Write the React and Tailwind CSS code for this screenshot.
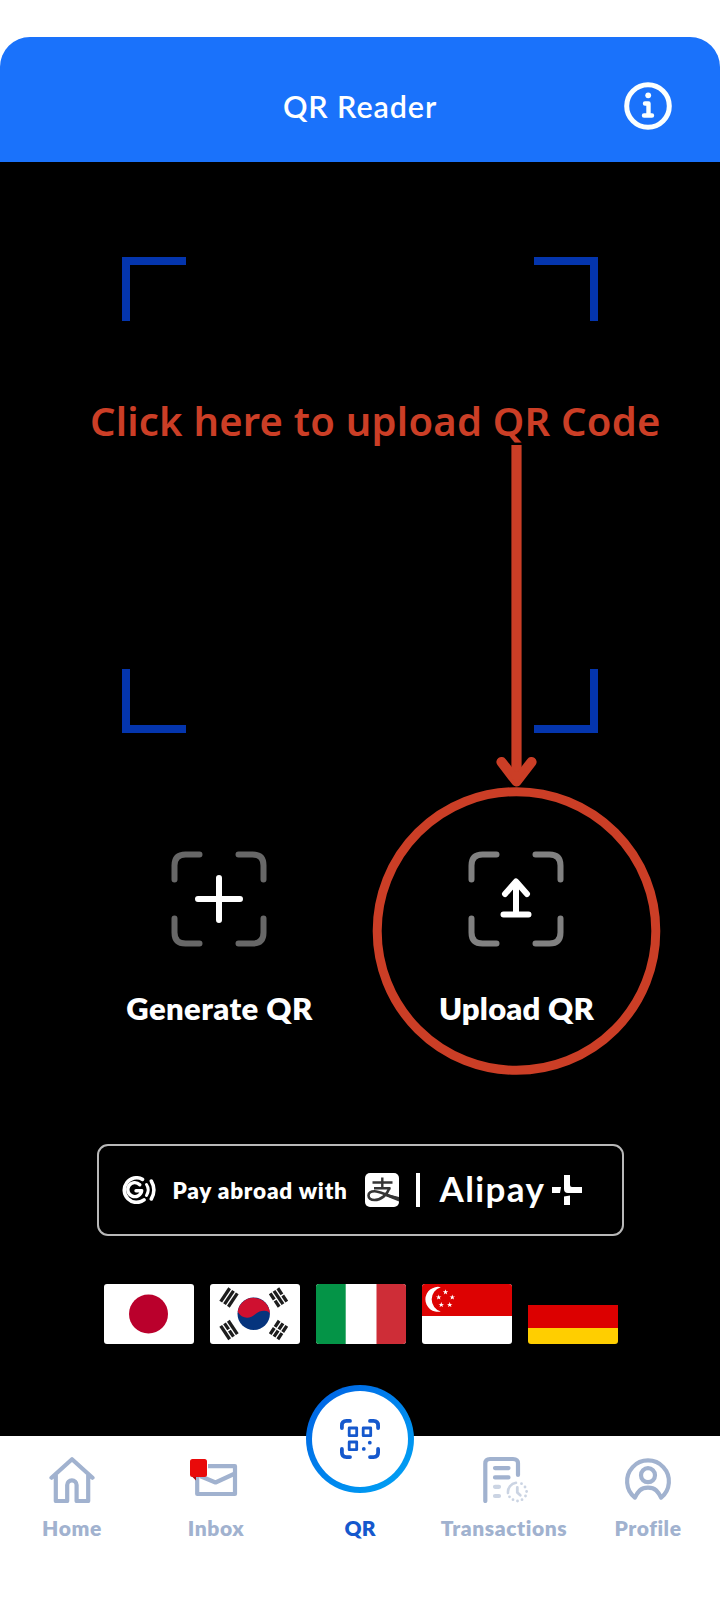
import React from 'react';

function Corners({ color, children }) {
  return (
    <svg className="mr-[2px] block size-24" viewBox="0 0 96 96" fill="none" strokeLinecap="round" strokeLinejoin="round">
      <g stroke={color} strokeWidth="6">
        <path d="M3.5 28.500V14.500Q3.500 3.500 14.500 3.500H28.500" />
        <path d="M67.500 3.500H81.500Q92.500 3.500 92.500 14.500V28.500" />
        <path d="M3.500 67.500V81.500Q3.500 92.500 14.500 92.500H28.500" />
        <path d="M67.500 92.500H81.500Q92.500 92.500 92.500 81.500V67.500" />
      </g>
      <g stroke="#fff" strokeWidth="6">{children}</g>
    </svg>
  );
}

function InfoIcon() {
  return (
    <svg className="block size-12" viewBox="0 0 48 48" fill="none" stroke="#fbfffe" strokeLinecap="round" strokeLinejoin="round">
      <circle cx="24" cy="24" r="21.300" strokeWidth="5" />
      <circle cx="24.200" cy="13.300" r="2.900" fill="#fbfffe" stroke="none" />
      <path d="M21 21.500H24.500V33.500M20 33.500H28" strokeWidth="4.400" />
    </svg>
  );
}

function GLogo() {
  return (
    <svg className="block h-7 w-[36px]" viewBox="0 0 36 28" fill="none" stroke="#fff" strokeLinecap="round" strokeLinejoin="round">
      <path d="M21.500 3.300A12.300 12.300 0 1 0 23 23.900" strokeWidth="3.600" />
      <path d="M18.800 8.700A7 7 0 1 0 20.700 14.700H15" strokeWidth="3.400" />
      <path d="M25.500 8.500Q28.900 13.500 25.500 19.500" strokeWidth="3" />
      <path d="M30.300 5Q35.500 14 30.300 23" strokeWidth="3.500" />
    </svg>
  );
}

function AlipayTile() {
  return (
    <svg className="block size-[34px]" viewBox="0 0 34 34">
      <rect width="34" height="34" rx="5" fill="#fff" />
      <g fill="none" stroke="#353535" strokeWidth="2.600">
        <path d="M7.500 9.500H27.500M17.300 4.500V15M9 15.200H25.500" strokeWidth="2.400" />
        <path d="M24.500 15C22 22 16 27 9.500 27C5.500 27 3.500 25 3.500 22.500C3.500 20 6 18.200 9.500 18.200C15 18.200 20 22 34 26" />
      </g>
      <path d="M20 20.500L34 24V28.500L19 22.500Z" fill="#353535" />
    </svg>
  );
}

function AlipayPlus() {
  return (
    <svg className="block size-[30px]" viewBox="0 0 30 30" fill="#fff">
      <path d="M0 12H9L8 18H0ZM12 0H18V10Q18 12 20 12H30V18H16Q12 18 12 14ZM12 21.500L18 20.500V30H12Z" />
    </svg>
  );
}

function Trigram({ x, y, r, broken }) {
  return (
    <g transform={`translate(${x} ${y}) rotate(${r})`} stroke="#1d1d1d" strokeWidth="3.300">
      {[-4.600, 0, 4.600].map((dy, i) => (
        <path key={dy} d={broken[i] ? `M-8 ${dy}H-.7M.7 ${dy}H8` : `M-8 ${dy}H8`} />
      ))}
    </g>
  );
}

const flags = [
  <>
    <rect width="90" height="60" fill="#fff" />
    <circle cx="44.500" cy="30" r="19.500" fill="#ba002c" />
  </>,
  <>
    <rect width="90" height="60" fill="#fff" />
    <circle cx="43.700" cy="29.800" r="16.200" fill="#05347d" />
    <path d="M27.700 27.500A16.200 16.200 0 0 1 59.900 30C59 25.500 50 25.500 45.500 30C40 35.500 31.500 35 27.700 27.500Z" fill="#cf1030" />
    <Trigram x="19" y="13.500" r="-56" broken={[0, 0, 0]} />
    <Trigram x="68.500" y="13.500" r="56" broken={[1, 0, 1]} />
    <Trigram x="19" y="46" r="56" broken={[0, 1, 0]} />
    <Trigram x="68.500" y="46" r="-56" broken={[1, 1, 1]} />
  </>,
  <>
    <rect width="90" height="60" fill="#fff" />
    <rect width="29.700" height="60" fill="#049447" />
    <rect x="60.500" width="29.500" height="60" fill="#ce2d37" />
  </>,
  <>
    <rect width="90" height="60" fill="#fff" />
    <rect width="90" height="32" fill="#dd0202" />
    <path d="M18.800 3.200A12.500 12.500 0 1 0 18.800 27.500A12.650 12.650 0 0 1 18.800 3.200Z" fill="#fff" />
    {[[23.500, 8], [30.300, 13.200], [27.700, 20.700], [19.300, 20.700], [16.700, 13.200]].map(([x, y]) => (
      <path key={x} transform={`translate(${x} ${y})`} fill="#fff" d="M0-2.800L.7-.8H2.800L1.100.4L1.700 2.400L0 1.200L-1.700 2.400L-1.100.4L-2.800-.8H-.7Z" />
    ))}
  </>,
  <>
    <rect width="90" height="60" fill="#000" />
    <rect y="21" width="90" height="23" fill="#dc0000" />
    <rect y="44" width="90" height="16" fill="#ffce00" />
  </>,
];

function HomeIcon() {
  return (
    <svg className="block size-12" viewBox="0 0 48 48" fill="none" stroke="#a1b2cf" strokeWidth="4.200" strokeLinecap="round" strokeLinejoin="round">
      <path d="M3.500 22.700L24 4.200L44.500 22.700M7.800 20V46H19.200V30A4.700 4.700 0 0 1 28.600 30V46H40.200V20" />
    </svg>
  );
}

function InboxIcon() {
  return (
    <svg className="block h-[38px] w-12" viewBox="0 0 48 38" fill="none" stroke="#a1b2cf" strokeWidth="4.200" strokeLinejoin="round">
      <path d="M7.200 16V35H45V7.200H18" />
      <path d="M10 17L25.500 23.500L45 14.500" />
      <path d="M1.500 17H6V21.500Z" fill="#a50a12" stroke="none" />
      <rect x="0" y="0" width="17" height="18" rx="2.500" fill="#e90a0a" stroke="none" />
    </svg>
  );
}

function QrIcon() {
  return (
    <svg className="block size-10" viewBox="0 0 40 40" fill="none" stroke="#1558cd" strokeLinecap="round" strokeLinejoin="round">
      <path d="M1.900 9V6.500Q1.900 1.900 6.500 1.900H10M30 1.900H33.500Q38.100 1.900 38.100 6.500V9M1.900 30V33.500Q1.900 38.100 6.500 38.100H10M30 38.100H33.500Q38.100 38.100 38.100 33.500V30" strokeWidth="3.800" />
      <path d="M9.200 9H16.700V16.700H9.200ZM23.200 9H30.700V16.700H23.200ZM9.200 23H16.700V30.700H9.200Z" strokeWidth="2.800" />
      <circle cx="29.800" cy="23.700" r="1.900" fill="#1558cd" stroke="none" />
      <circle cx="23.800" cy="29.900" r="1.900" fill="#1558cd" stroke="none" />
    </svg>
  );
}

function TransactionsIcon() {
  return (
    <svg className="block h-12 w-[46px]" viewBox="0 0 46 48" fill="none" stroke="#a1b2cf" strokeLinecap="round" strokeLinejoin="round">
      <path d="M2.300 46V8.500Q2.300 4 7 4H30Q35 4 35 8.500V20" strokeWidth="4.200" />
      <path d="M12 13.100H25.500M12 22.400H25.500" strokeWidth="4.200" />
      <g stroke="#cbd4e3">
        <path d="M12 31.800H16M12 41H16" strokeWidth="4.200" />
        <path d="M25 38A9.300 9.300 0 0 1 33 27.800" strokeWidth="2.600" />
        <path d="M34.300 32.500V37.500L37.300 40.200" strokeWidth="2.800" />
        <path d="M38.500 28.700h.01M42 32h.01M43.600 36.500h.01M42.500 41h.01M39 44.700h.01M34.500 46h.01M30 44.700h.01M26.500 41.800h.01" strokeWidth="2.800" />
      </g>
    </svg>
  );
}

function ProfileIcon() {
  return (
    <svg className="block size-12" viewBox="0 0 48 48" fill="none" stroke="#a1b2cf" strokeWidth="4.200" strokeLinecap="round" strokeLinejoin="round">
      <path d="M10.900 43.600A20.900 20.900 0 1 1 37.100 43.600C34 37.500 31.500 33.600 24 33.600S14 37.500 10.900 43.600Z" />
      <circle cx="24" cy="21.200" r="7" />
    </svg>
  );
}

function NavItem({ icon, label }) {
  return (
    <div className="flex flex-1 flex-col items-center">
      <div className="flex h-12 items-end justify-center">{icon}</div>
      <span className="mt-[12px] whitespace-nowrap text-[21px] leading-[26px] font-extrabold tracking-[0.6px] text-[#a1b2cf]">{label}</span>
    </div>
  );
}

export default function App() {
  return (
    <div className="relative flex h-[1600px] w-[720px] flex-col overflow-hidden bg-white pt-[37px] font-['Lato','Noto_Sans',sans-serif]">
      <header className="grid h-[125px] shrink-0 grid-cols-[1fr_auto_1fr] items-center rounded-t-[30px] bg-[#1a72fb] px-12 pt-[14px]">
        <span />
        <h1 className="-mt-[2px] text-[30.500px] leading-9 font-semibold tracking-[0.9px] text-white">QR Reader</h1>
        <div className="-mt-[2px] flex justify-end">
          <InfoIcon />
        </div>
      </header>

      <main className="flex h-[1274px] shrink-0 flex-col items-center bg-black pt-[95px]">
        <div className="grid size-[476px] grid-cols-2 content-between">
          <span className="size-16 border-t-8 border-l-8 border-[#0435ad]" />
          <span className="size-16 justify-self-end border-t-8 border-r-8 border-[#0435ad]" />
          <span className="size-16 border-b-8 border-l-8 border-[#0435ad]" />
          <span className="size-16 justify-self-end border-r-8 border-b-8 border-[#0435ad]" />
        </div>

        <div className="mt-[118px] flex w-full pr-[55px] pl-[71px]">
          <div className="flex flex-1 flex-col items-center gap-[42px]">
            <Corners color="#676767">
              <path d="M48 27V69M27 48H69" />
            </Corners>
            <span className="text-[31px] leading-[38px] font-extrabold tracking-[0.4px] text-white">Generate QR</span>
          </div>
          <div className="flex flex-1 flex-col items-center gap-[42px]">
            <Corners color="#818181">
              <path d="M48 31V63M37 43L48 30.500L59 43M35.500 63.500H60.500" />
            </Corners>
            <span className="text-[31px] leading-[38px] font-extrabold tracking-[0.2px] text-white">Upload QR</span>
          </div>
        </div>

        <div className="mt-[117px] flex h-[92px] w-[527px] items-center rounded-[11px] border-2 border-[#b8b8b8] pl-[22px]">
          <GLogo />
          <span className="mt-px ml-[16px] w-[192px] whitespace-nowrap text-[22.5px] font-extrabold tracking-[0.8px] text-white">Pay abroad with</span>
          <AlipayTile />
          <span className="ml-[17px] h-[34px] w-1 bg-white" />
          <span className="-mt-1 ml-[20px] w-[112px] text-[35px] leading-[34px] font-bold tracking-[1.400px] text-white">Alipay</span>
          <AlipayPlus />
        </div>

        <div className="mt-12 ml-[2px] flex gap-4">
          {flags.map((f, i) => (
            <svg key={i} className="block h-[60px] w-[90px] rounded-[3px]" viewBox="0 0 90 60">{f}</svg>
          ))}
        </div>
      </main>

      <nav className="flex h-[127px] shrink-0 bg-white pt-[19px]">
        <NavItem icon={<HomeIcon />} label="Home" />
        <NavItem icon={<div className="mr-[5px] mb-[6px]"><InboxIcon /></div>} label="Inbox" />
        <div className="flex flex-1 flex-col items-center">
          <div className="-mt-[70px] flex size-[108px] shrink-0 items-center justify-center rounded-full bg-linear-to-br from-[#065de3] to-[#0aa6f5]">
            <div className="flex size-24 items-center justify-center rounded-full bg-white">
              <QrIcon />
            </div>
          </div>
          <span className="mt-[22px] text-[21px] leading-[26px] font-extrabold text-[#1558cd]">QR</span>
        </div>
        <NavItem icon={<div className="ml-[4px]"><TransactionsIcon /></div>} label="Transactions" />
        <NavItem icon={<div className="mb-px"><ProfileIcon /></div>} label="Profile" />
      </nav>

      <span className="absolute top-[394px] left-[90px] whitespace-nowrap font-['Noto_Sans','Open_Sans',sans-serif] text-[40px] leading-[54px] font-semibold tracking-[0.22px] text-[#cb3e26]">Click here to upload QR Code</span>
      <svg className="absolute top-[445px] left-[372px] h-[632px] w-[290px]" viewBox="0 0 290 632" fill="none" stroke="#cb3e26">
        <path d="M144.500 0V335" strokeWidth="10.200" />
        <path d="M129.500 317L144.500 336.500L159.500 317" strokeWidth="10.200" strokeLinecap="round" strokeLinejoin="round" />
        <path d="M137 327H152L144.500 341Z" fill="#cb3e26" stroke="none" />
        <circle cx="144.500" cy="486" r="139.300" strokeWidth="9" />
      </svg>
    </div>
  );
}
